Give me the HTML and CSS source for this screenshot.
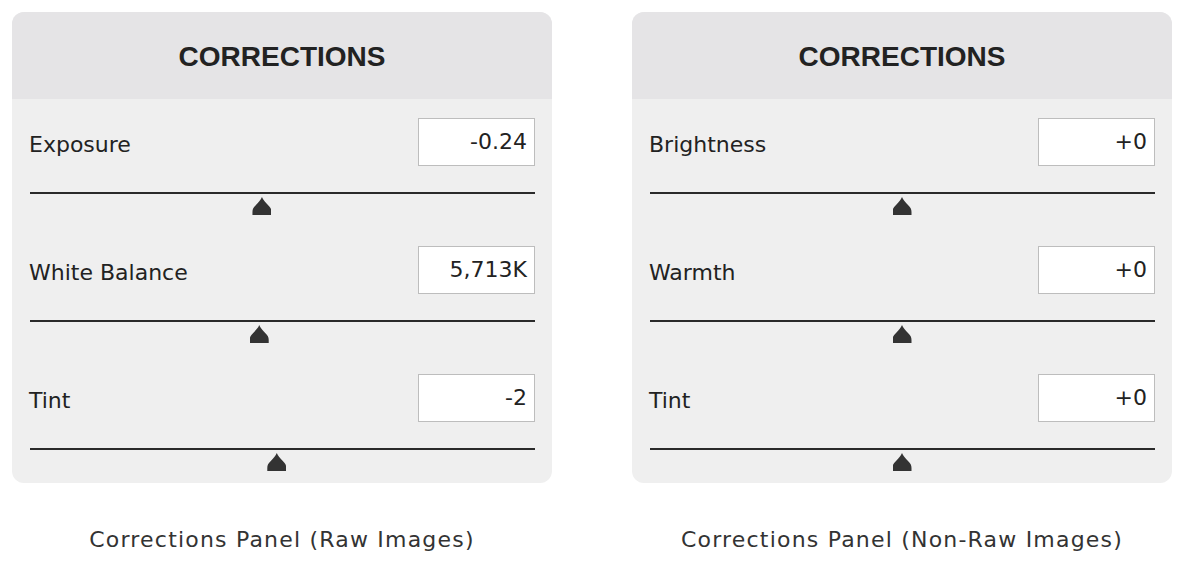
FILE: index.html
```html
<!DOCTYPE html>
<html lang="en">
<head>
    <meta charset="UTF-8">
    <title>Corrections Panels</title>
    <link rel="stylesheet" href="styles.css">
</head>
<body>
<div class="figures">
    <div class="figure">
        <div class="panel">
            <div class="panel-title">CORRECTIONS</div>
            <div class="control">
                <div class="control-row">
                    <span class="label">Exposure</span>
                    <span class="value">-0.24</span>
                </div>
                <div class="track"></div>
                <div class="thumb-rail"><span class="thumb" style="left: 46.04%"></span></div>
            </div>
            <div class="control">
                <div class="control-row">
                    <span class="label">White Balance</span>
                    <span class="value">5,713K</span>
                </div>
                <div class="track"></div>
                <div class="thumb-rail"><span class="thumb" style="left: 45.5%"></span></div>
            </div>
            <div class="control">
                <div class="control-row">
                    <span class="label">Tint</span>
                    <span class="value">-2</span>
                </div>
                <div class="track"></div>
                <div class="thumb-rail"><span class="thumb" style="left: 48.97%"></span></div>
            </div>
        </div>
        <p class="caption">Corrections Panel (Raw Images)</p>
    </div>
    <div class="figure">
        <div class="panel">
            <div class="panel-title">CORRECTIONS</div>
            <div class="control">
                <div class="control-row">
                    <span class="label">Brightness</span>
                    <span class="value">+0</span>
                </div>
                <div class="track"></div>
                <div class="thumb-rail"><span class="thumb" style="left: 50%"></span></div>
            </div>
            <div class="control">
                <div class="control-row">
                    <span class="label">Warmth</span>
                    <span class="value">+0</span>
                </div>
                <div class="track"></div>
                <div class="thumb-rail"><span class="thumb" style="left: 50%"></span></div>
            </div>
            <div class="control">
                <div class="control-row">
                    <span class="label">Tint</span>
                    <span class="value">+0</span>
                </div>
                <div class="track"></div>
                <div class="thumb-rail"><span class="thumb" style="left: 50%"></span></div>
            </div>
        </div>
        <p class="caption">Corrections Panel (Non-Raw Images)</p>
    </div>
</div>
</body>
</html>
```

FILE: styles.css
```css
body{
    margin: 0;
    background: #fff;
    font-family: 'DejaVu Sans', 'Liberation Sans', sans-serif;
    color: #222;
}
.figures{
    display: flex;
    gap: 80px;
    padding: 12px 0 0 12px;
}
.figure{
    width: 540px;
}
.panel{
    background: #efefef;
    border-radius: 12px;
    overflow: hidden;
}
.panel-title{
    height: 87px;
    background: #e5e4e6;
    display: flex;
    align-items: center;
    justify-content: center;
    font-family: 'Liberation Sans', sans-serif;
    font-weight: bold;
    font-size: 28px;
    color: #222;
    padding-top: 3px;
    box-sizing: border-box;
}
.control{
    padding: 19px 17px 12px 17px;
}
.control-row{
    height: 48px;
    display: flex;
    align-items: center;
    justify-content: space-between;
}
.label{
    font-size: 22px;
    margin-top: 4px;
}
.value{
    width: 117px;
    height: 48px;
    box-sizing: border-box;
    background: #fff;
    border: 1px solid #bdbdbd;
    text-align: right;
    padding: 10px 7px 0 0;
    font-size: 22px;
}
.track{
    margin-top: 26px;
    margin-left: 1px;
    height: 2px;
    background: #2a2a2a;
}
.thumb-rail{
    position: relative;
    height: 18px;
    margin-top: 3px;
}
.thumb{
    position: absolute;
    top: 0;
    width: 19px;
    height: 18px;
    margin-left: -9.5px;
    background: #333;
    clip-path: path('M9.5 0 C10.5 3 13 5 15.5 8 C18 10.5 19 12 19 15 L19 18 L0 18 L0 15 C0 12 1 10.5 3.5 8 C6 5 8.5 3 9.5 0 Z');
}
.caption{
    margin: 44px 0 0;
    text-align: center;
    font-size: 22px;
    letter-spacing: 1.2px;
    color: #333;
}
```
